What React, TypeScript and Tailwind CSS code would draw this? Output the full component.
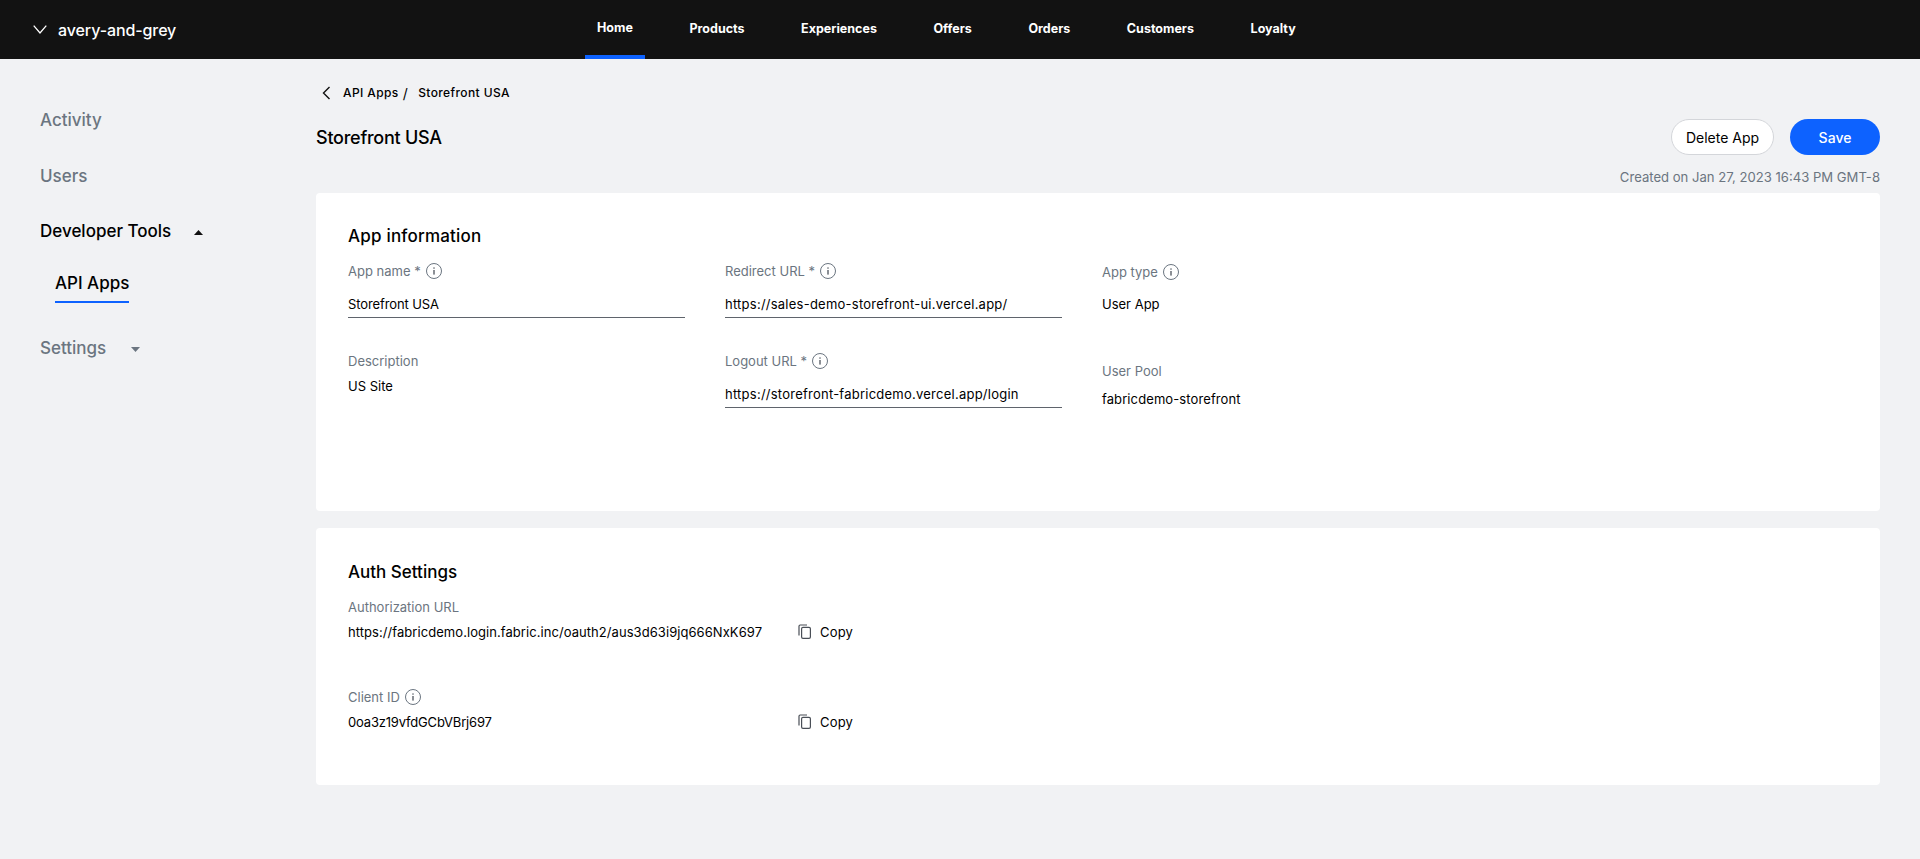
import React from "react";

const navItems = ["Home", "Products", "Experiences", "Offers", "Orders", "Customers", "Loyalty"];

const InfoIcon = () => (
  <svg width="16" height="16" viewBox="0 0 16 16" fill="none" className="shrink-0">
    <circle cx="8" cy="8" r="7.5" stroke="#6b7580" />
    <rect x="7.4" y="7" width="1.2" height="4.6" fill="#3f4650" />
    <rect x="7.4" y="4.4" width="1.2" height="1.3" fill="#3f4650" />
  </svg>
);

const CopyIcon = () => (
  <svg width="14" height="16" viewBox="0 0 14 16" fill="none" className="shrink-0 -mt-[2px]">
    <path d="M1 11.5V2.2C1 1.5 1.5 1 2.2 1H9" stroke="#4a4f57" strokeWidth="1.2" />
    <rect x="3.6" y="3.4" width="8.8" height="11" rx="1.4" stroke="#4a4f57" strokeWidth="1.2" />
  </svg>
);

const Caret = ({ up, color }: { up?: boolean; color: string }) => (
  <svg width="9" height="5" viewBox="0 0 9 5" fill={color}>
    <path d={up ? "M4.5 0L9 5H0Z" : "M4.5 5L9 0H0Z"} />
  </svg>
);

const Label = ({ text, info }: { text: string; info?: boolean }) => (
  <div className="flex items-center gap-[5px] h-[16px] text-[13px] leading-[16px] text-[#6b7580]">
    <span>{text}</span>
    {info && <InfoIcon />}
  </div>
);

const InputField = ({ label, value, valueClass }: { label: string; value: string; valueClass?: string }) => (
  <div className="w-[337px]">
    <Label text={label} info />
    <div className={`mt-[11px] h-[28px] border-b border-[#5f646c] text-[13px] leading-[28px] text-black ${valueClass ?? ""}`}>
      {value}
    </div>
  </div>
);

const CopyRow = ({ value, valueClass }: { value: string; valueClass: string }) => (
  <div className="flex items-center mt-[9px] h-[18px] text-[13px] text-black">
    <span className={`w-[450px] ${valueClass}`}>{value}</span>
    <CopyIcon />
    <span className="ml-[8px] tracking-[0.2px]">Copy</span>
  </div>
);

export default function App() {
  return (
    <div className="min-h-[859px] bg-[#f1f2f4] font-['Inter',sans-serif]">
      <header className="h-[59px] bg-[#121212] flex text-white">
        <div className="w-[585px] flex items-center pl-[33px]">
          <svg width="14" height="9" viewBox="0 0 14 9" fill="none" className="shrink-0">
            <path d="M0.7 0.7L7 8L13.3 0.7" stroke="white" strokeWidth="1.3" />
          </svg>
          <span className="ml-[11px] text-[16px] font-medium tracking-[-0.1px]">avery-and-grey</span>
        </div>
        <nav className="flex gap-[56.6px] text-[12.5px] font-bold">
          {navItems.map((item) => (
            <div
              key={item}
              className={
                item === "Home"
                  ? "h-[59px] px-[12px] mr-[-12px] flex items-center border-b-4 border-[#0d62ff] pt-[1px]"
                  : "h-[59px] flex items-center"
              }
            >
              {item}
            </div>
          ))}
        </nav>
      </header>

      <div className="flex">
        <aside className="w-[316px] pl-[40px] pt-[50px] text-[17px] font-medium">
          <div className="h-[22px] leading-[22px] text-[#6b7580]">Activity</div>
          <div className="mt-[34px] h-[22px] leading-[22px] text-[#6b7580]">Users</div>
          <div className="mt-[34px] h-[22px] flex items-center gap-[23px] text-black">
            Developer Tools <Caret up color="#111" />
          </div>
          <div className="mt-[29px] ml-[15px] w-[74px] pb-[7px] border-b-2 border-[#0d62ff] leading-[22px] text-black whitespace-nowrap">
            API Apps
          </div>
          <div className="mt-[35px] h-[22px] flex items-center gap-[25px] text-[#6b7580]">
            Settings <Caret color="#6b7580" />
          </div>
        </aside>

        <main className="flex-1 pr-[40px]">
          <div className="mt-[27px] ml-[6px] h-[14px] flex items-center text-[12px] tracking-[0.4px] text-black">
            <svg width="9" height="14" viewBox="0 0 9 14" fill="none" className="shrink-0">
              <path d="M7.5 1L1.5 7L7.5 13" stroke="#111" strokeWidth="1.4" />
            </svg>
            <span className="ml-[12px] font-medium">API Apps</span>
            <span className="ml-[4px] text-[14px]">/</span>
            <span className="ml-[10px] font-medium">Storefront USA</span>
          </div>

          <div className="flex items-start justify-between mt-[19px]">
            <h1 className="mt-[7px] text-[18px] leading-[24px] font-medium tracking-[-0.25px] text-black">
              Storefront USA
            </h1>
            <div className="flex gap-[16px]">
              <button className="w-[103px] h-[36px] rounded-full bg-white border border-[#d4d6da] text-[14px] text-black">
                Delete App
              </button>
              <button className="w-[90px] h-[36px] rounded-full bg-[#0d62ff] text-[14px] font-medium text-white">
                Save
              </button>
            </div>
          </div>
          <div className="mt-[14px] h-[17px] text-right text-[13.1px] leading-[17px] text-[#6b7580]">
            Created on Jan 27, 2023 16:43 PM GMT-8
          </div>

          <section className="mt-[7px] h-[318px] rounded-[4px] bg-white pl-[32px] pt-[33px]">
            <h2 className="h-[20px] text-[17px] leading-[20px] font-medium tracking-[0.2px] text-black">App information</h2>
            <div className="mt-[17px] grid grid-cols-[377px_377px_1fr] grid-rows-[90px_auto]">
              <InputField label="App name *" value="Storefront USA" valueClass="tracking-[-0.1px]" />
              <InputField
                label="Redirect URL *"
                value="https://sales-demo-storefront-ui.vercel.app/"
                valueClass="tracking-[0.24px]"
              />
              <div className="pt-[1px]">
                <Label text="App type" info />
                <div className="mt-[12px] text-[13px] leading-[24px] text-black">User App</div>
              </div>
              <div>
                <Label text="Description" />
                <div className="mt-[8px] text-[13px] leading-[18px] text-black">US Site</div>
              </div>
              <InputField
                label="Logout URL *"
                value="https://storefront-fabricdemo.vercel.app/login"
                valueClass="tracking-[0.24px]"
              />
              <div className="pt-[10px]">
                <Label text="User Pool" />
                <div className="mt-[8px] text-[13px] leading-[24px] tracking-[0.1px] text-black">fabricdemo-storefront</div>
              </div>
            </div>
          </section>

          <section className="mt-[17px] h-[257px] rounded-[4px] bg-white pl-[32px] pt-[34px]">
            <h2 className="h-[20px] text-[17px] leading-[20px] font-medium text-black">Auth Settings</h2>
            <div className="mt-[17px]">
              <Label text="Authorization URL" />
              <CopyRow
                value="https://fabricdemo.login.fabric.inc/oauth2/aus3d63i9jq666NxK697"
                valueClass="tracking-[0.06px]"
              />
            </div>
            <div className="mt-[47px]">
              <Label text="Client ID" info />
              <CopyRow value="0oa3z19vfdGCbVBrj697" valueClass="tracking-[-0.18px]" />
            </div>
          </section>
        </main>
      </div>
    </div>
  );
}
